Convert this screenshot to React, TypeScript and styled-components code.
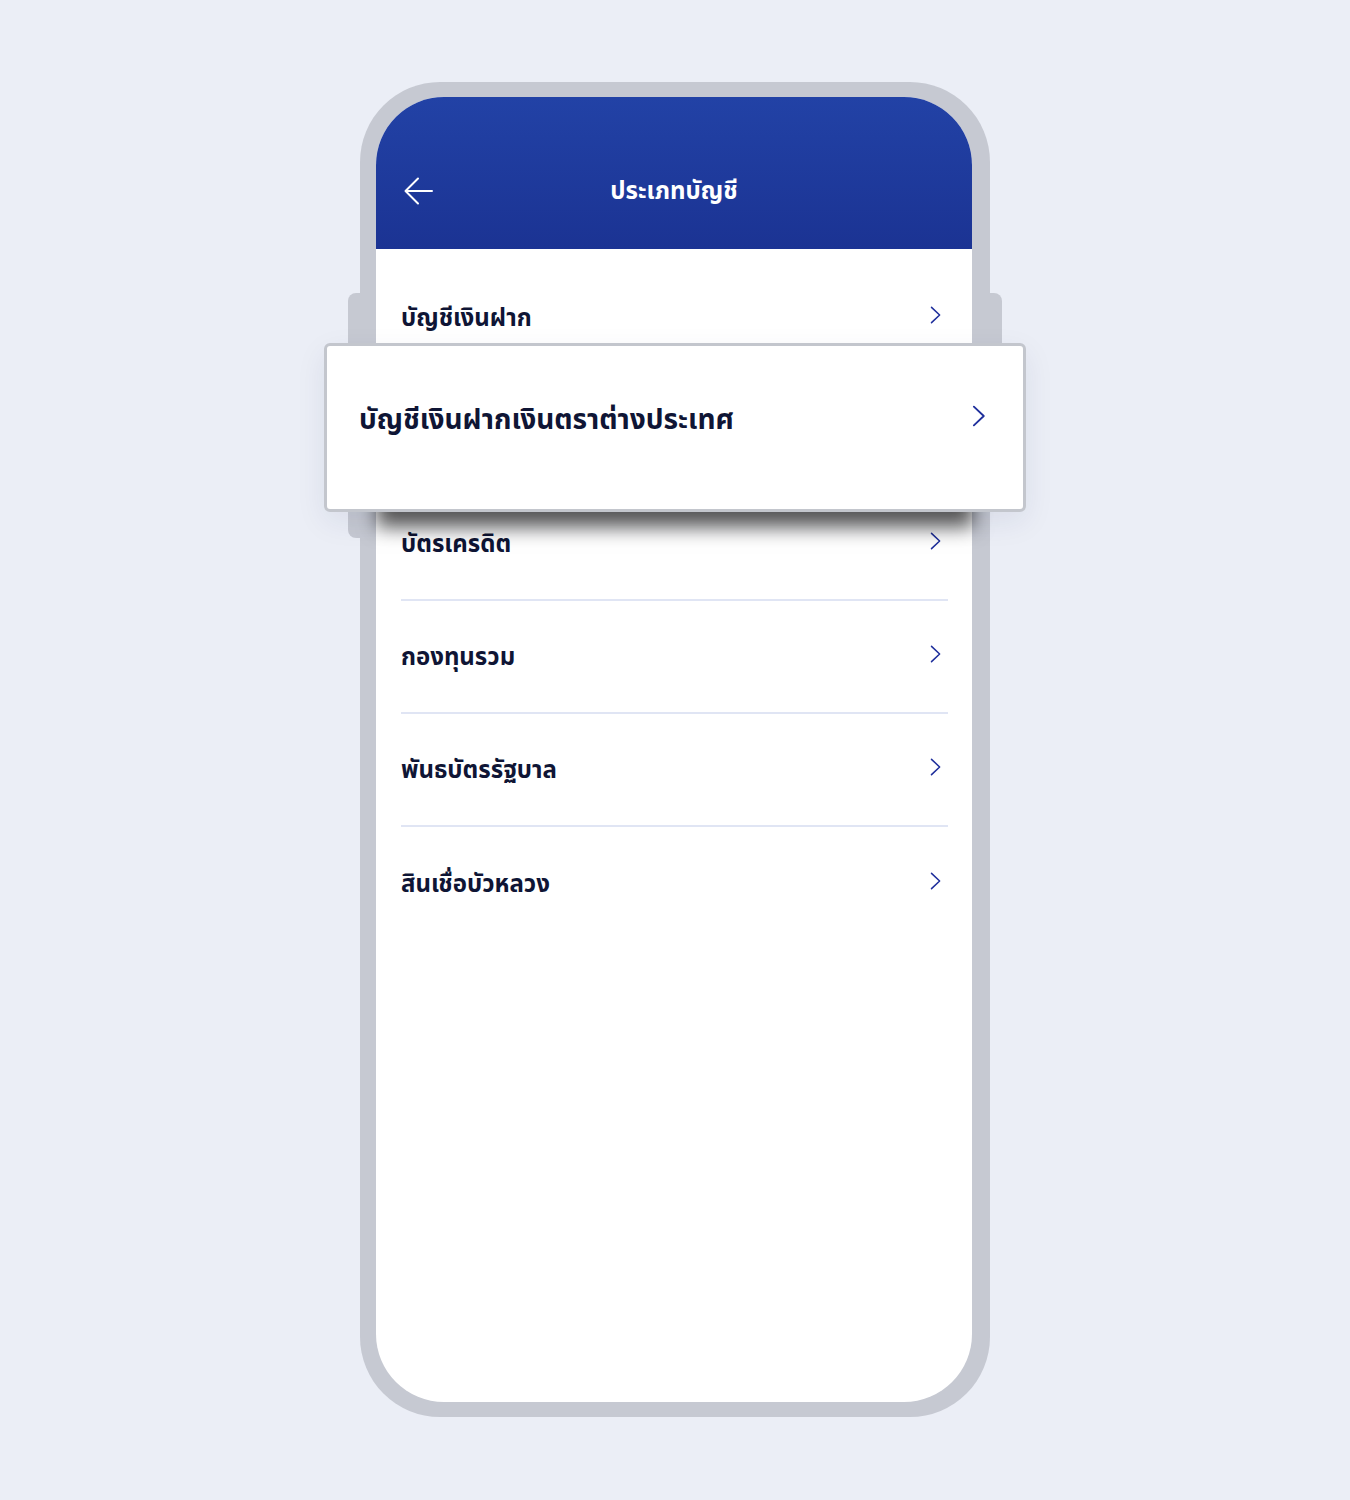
import React from "react";
import styled, { createGlobalStyle } from "styled-components";

const GlobalStyle = createGlobalStyle`
  body {
    margin: 0;
    background: #ebeef6;
    font-family: "Noto Sans Thai", "Noto Sans", "Liberation Sans", sans-serif;
  }
`;

const accounts = [
  "บัญชีเงินฝาก",
  "บัญชีเงินฝากเงินตราต่างประเทศ",
  "บัตรเครดิต",
  "กองทุนรวม",
  "พันธบัตรรัฐบาล",
  "สินเชื่อบัวหลวง",
];

const ACTIVE = 1;

function Chevron({ size = 18, lift = 6 }: { size?: number; lift?: number }) {
  return (
    <ChevronIcon width={size * 0.62} height={size} viewBox="0 0 12 20" fill="none" $lift={lift}>
      <path d="M1.5 1.5 L10.5 10 L1.5 18.5" stroke="currentColor" strokeWidth="1.7" strokeLinecap="round" strokeLinejoin="round" />
    </ChevronIcon>
  );
}

export default function App() {
  return (
    <Page>
      <GlobalStyle />
      <Phone>
        <SideButton $side="left" $top={211} $height={245} />
        <SideButton $side="right" $top={211} $height={80} />
        <Screen>
          <Header>
            <HeaderRow>
              <BackButton aria-label="back">
                <svg width="30" height="28" viewBox="0 0 30 28" fill="none">
                  <path d="M28 14 H2 M14 1.5 L1.5 14 L14 26.5" stroke="#fff" strokeWidth="2" strokeLinecap="round" strokeLinejoin="round" />
                </svg>
              </BackButton>
              <Title>ประเภทบัญชี</Title>
            </HeaderRow>
          </Header>
          <List>
            {accounts.map((name, i) =>
              i === ACTIVE ? (
                <ActiveCard key={name}>
                  <ActiveLabel>{name}</ActiveLabel>
                  <Chevron size={22} lift={10} />
                </ActiveCard>
              ) : (
                <Row key={name} $last={i === accounts.length - 1}>
                  <Label>{name}</Label>
                  <Chevron />
                </Row>
              )
            )}
          </List>
        </Screen>
      </Phone>
    </Page>
  );
}

const Page = styled.div`
  min-height: 1500px;
  padding-top: 82px;
  box-sizing: border-box;
  display: flex;
  justify-content: center;
  align-items: flex-start;
`;

const Phone = styled.div`
  position: relative;
  width: 630px;
  height: 1335px;
  box-sizing: border-box;
  padding: 15px 18px 15px 16px;
  border-radius: 80px;
  background: #c6c9d2;
`;

const SideButton = styled.div<{ $side: "left" | "right"; $top: number; $height: number }>`
  position: absolute;
  top: ${(p) => p.$top}px;
  ${(p) => p.$side}: -12px;
  width: 14px;
  height: ${(p) => p.$height}px;
  background: #c6c9d2;
  border-radius: ${(p) => (p.$side === "left" ? "8px 0 0 8px" : "0 8px 8px 0")};
`;

const Screen = styled.div`
  height: 100%;
  background: #fff;
  border-radius: 68px;
  display: flex;
  flex-direction: column;
`;

const Header = styled.header`
  height: 152px;
  box-sizing: border-box;
  padding: 76px 0 0;
  border-radius: 68px 68px 0 0;
  background: linear-gradient(180deg, #2242a6 0%, #1b3393 100%);
`;

const HeaderRow = styled.div`
  position: relative;
  height: 36px;
  display: flex;
  align-items: center;
  justify-content: center;
`;

const BackButton = styled.button`
  position: absolute;
  left: 28px;
  top: 50%;
  transform: translateY(-50%);
  display: flex;
  padding: 0;
  border: 0;
  background: none;
  cursor: pointer;
`;

const Title = styled.h1`
  margin: 0 0 -2px;
  color: #fff;
  font-size: 24px;
  font-weight: 700;
`;

const List = styled.div`
  display: flex;
  flex-direction: column;
  padding-top: 13px;
`;

const Row = styled.div<{ $last?: boolean }>`
  height: 113px;
  box-sizing: border-box;
  margin: 0 24px 0 25px;
  padding-right: 7px;
  display: flex;
  align-items: center;
  justify-content: space-between;
  border-bottom: ${(p) => (p.$last ? "none" : "2px solid #e0e5f4")};
`;

const Label = styled.span`
  color: #0f1535;
  font-size: 24px;
  font-weight: 700;
  margin-top: 2px;
`;

const ChevronIcon = styled.svg<{ $lift: number }>`
  color: #1f2f9c;
  flex-shrink: 0;
  margin-bottom: ${(p) => p.$lift}px;
`;

const ActiveCard = styled.div`
  position: relative;
  z-index: 2;
  height: 169px;
  box-sizing: border-box;
  margin: -32px -54px -24px -52px;
  padding: 0 37px 14px 32px;
  display: flex;
  align-items: center;
  justify-content: space-between;
  background: #fff;
  border: 3px solid #c3c6cd;
  border-radius: 6px;
  box-shadow: 0 68px 18px -53px rgba(0, 0, 0, 0.65), 0 10px 30px rgba(30, 40, 90, 0.08);
`;

const ActiveLabel = styled.span`
  color: #0f1535;
  font-size: 28px;
  font-weight: 700;
`;
